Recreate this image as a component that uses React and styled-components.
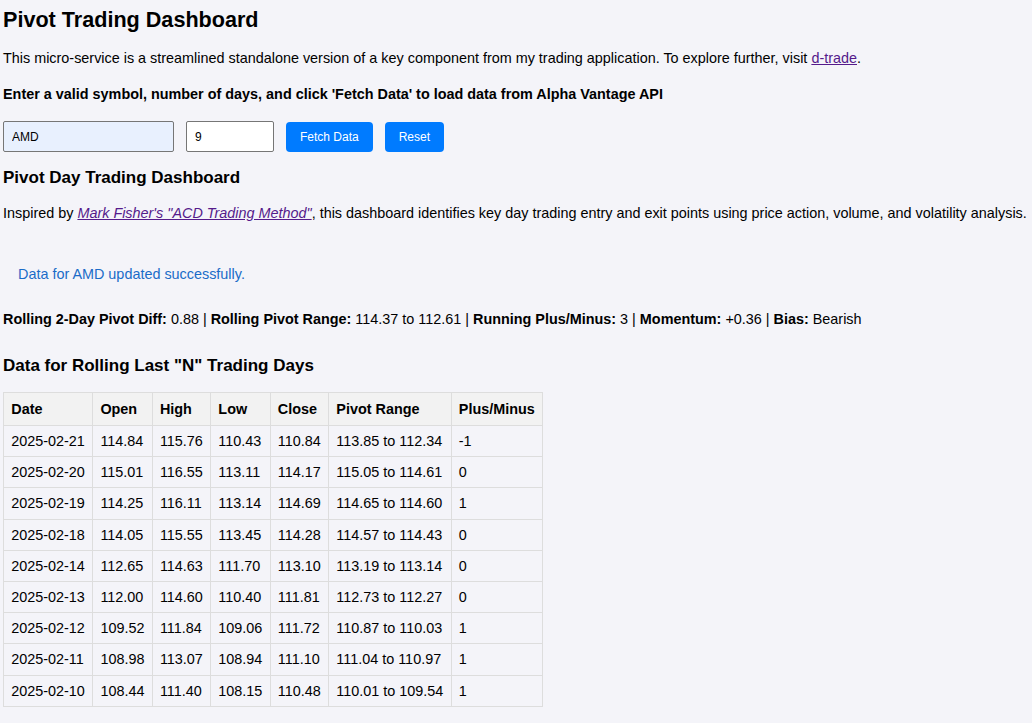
import styled, { createGlobalStyle } from "styled-components";

const GlobalStyle = createGlobalStyle`
  html, body {
    margin: 0;
    padding: 0;
    background: #f4f4f9;
  }
  body {
    font-family: "Liberation Sans", Arial, sans-serif;
    font-size: 14.4px;
    color: #000;
  }
`;

const Page = styled.div`
  padding: 0 3px;
`;

const Title = styled.h1`
  font-size: 21.6px;
  margin: 7px 0 0;
  line-height: 25px;
`;

const Text = styled.p`
  margin: ${({ $top }) => $top || "14px"} 0 0;
  line-height: 17px;
  font-weight: ${({ $bold }) => ($bold ? "bold" : "normal")};

  a {
    color: #551a8b;
  }
`;

const Form = styled.div`
  display: flex;
  align-items: center;
  margin-top: 18px;
`;

const Input = styled.input`
  box-sizing: border-box;
  height: 31px;
  width: ${({ $width }) => $width}px;
  margin-right: 12px;
  padding: 0 8px;
  border: 1px solid #767676;
  border-radius: 2px;
  background: ${({ $filled }) => ($filled ? "#e8f0fe" : "#fff")};
  font-family: "Liberation Sans", Arial, sans-serif;
  font-size: 12px;
  color: #000;
`;

const Button = styled.button`
  height: 30px;
  padding: 0 14px;
  margin-right: 12px;
  border: none;
  border-radius: 4px;
  background: #007bff;
  color: #fff;
  font-family: "Liberation Sans", Arial, sans-serif;
  font-size: 12px;
`;

const Heading = styled.h3`
  font-size: 17px;
  line-height: 20px;
  margin: ${({ $top }) => $top} 0 0;
`;

const Message = styled.p`
  margin: 44px 0 0;
  padding-left: 15px;
  line-height: 17px;
  color: #1a6cc8;
`;

const Table = styled.table`
  border-collapse: collapse;
  margin-top: 16px;

  th, td {
    border: 1px solid #ddd;
    padding: 7.1px 7.25px;
    text-align: left;
  }

  th {
    background: #f2f2f2;
    padding-top: 8px;
    padding-bottom: 8px;
  }
`;

const rows = [
  ["2025-02-21", "114.84", "115.76", "110.43", "110.84", "113.85 to 112.34", "-1"],
  ["2025-02-20", "115.01", "116.55", "113.11", "114.17", "115.05 to 114.61", "0"],
  ["2025-02-19", "114.25", "116.11", "113.14", "114.69", "114.65 to 114.60", "1"],
  ["2025-02-18", "114.05", "115.55", "113.45", "114.28", "114.57 to 114.43", "0"],
  ["2025-02-14", "112.65", "114.63", "111.70", "113.10", "113.19 to 113.14", "0"],
  ["2025-02-13", "112.00", "114.60", "110.40", "111.81", "112.73 to 112.27", "0"],
  ["2025-02-12", "109.52", "111.84", "109.06", "111.72", "110.87 to 110.03", "1"],
  ["2025-02-11", "108.98", "113.07", "108.94", "111.10", "111.04 to 110.97", "1"],
  ["2025-02-10", "108.44", "111.40", "108.15", "110.48", "110.01 to 109.54", "1"],
];

const headers = ["Date", "Open", "High", "Low", "Close", "Pivot Range", "Plus/Minus"];

export default function App() {
  return (
    <Page>
      <GlobalStyle />
      <Title>Pivot Trading Dashboard</Title>
      <Text $top="18px">
        This micro-service is a streamlined standalone version of a key component from my trading
        application. To explore further, visit <a href="#">d-trade</a>.
      </Text>
      <Text $bold $top="19px">
        Enter a valid symbol, number of days, and click 'Fetch Data' to load data from Alpha Vantage API
      </Text>
      <Form>
        <Input $width={171} $filled defaultValue="AMD" />
        <Input $width={88} defaultValue="9" />
        <Button>Fetch Data</Button>
        <Button>Reset</Button>
      </Form>
      <Heading $top="16px">Pivot Day Trading Dashboard</Heading>
      <Text $top="17px">
        Inspired by <a href="#"><em>Mark Fisher's "ACD Trading Method"</em></a>, this dashboard
        identifies key day trading entry and exit points using price action, volume, and volatility
        analysis.
      </Text>
      <Message>Data for AMD updated successfully.</Message>
      <Text $top="28px">
        <b>Rolling 2-Day Pivot Diff:</b> 0.88 | <b>Rolling Pivot Range:</b> 114.37 to 112.61 |{" "}
        <b>Running Plus/Minus:</b> 3 | <b>Momentum:</b> +0.36 | <b>Bias:</b> Bearish
      </Text>
      <Heading $top="28px">Data for Rolling Last "N" Trading Days</Heading>
      <Table>
        <thead>
          <tr>
            {headers.map((h) => (
              <th key={h}>{h}</th>
            ))}
          </tr>
        </thead>
        <tbody>
          {rows.map((r) => (
            <tr key={r[0]}>
              {r.map((c, i) => (
                <td key={i}>{c}</td>
              ))}
            </tr>
          ))}
        </tbody>
      </Table>
    </Page>
  );
}
